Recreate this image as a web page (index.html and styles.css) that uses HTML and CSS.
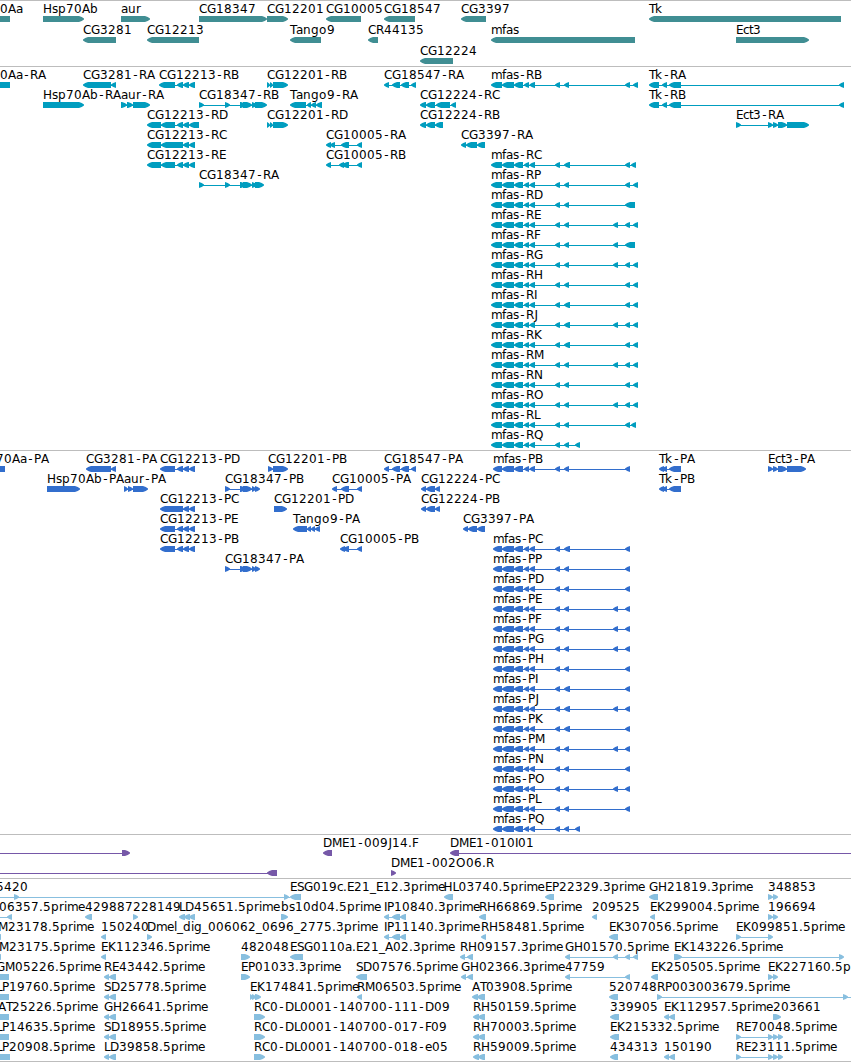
FILE: index.html
```html
<!DOCTYPE html>
<html lang="en">
<head>
<meta charset="utf-8">
<title>Genome browser</title>
<link rel="stylesheet" href="styles.css">
</head>
<body>
<main class="browser" id="browser"></main>
<script src="tracks.js"></script>
</body>
</html>
```
FILE: styles.css
```css
body {
  margin: 0;
  background: #fff;
}

.browser {
  display: flex;
  flex-direction: column;
  width: 851px;
  height: 1062px;
  overflow: hidden;
}

.track {
  display: flex;
  flex-direction: column;
  flex: none;
  border-top: 1px solid #bdbdbd;
  padding-bottom: 3px;
}

.track:last-child {
  border-bottom: 1px solid #bdbdbd;
}

.track-genes,
.track-est {
  padding-bottom: 2px;
}

.row {
  display: block;
  flex: none;
  width: 851px;
  height: 20px;
  overflow: visible;
}

.track-genes .row {
  height: 21px;
}

.label {
  font-family: "DejaVu Sans", sans-serif;
  font-size: 12px;
  fill: #000;
}

.track-genes { color: #408e93; }
.track-transcripts { color: #009dbf; }
.track-cds { color: #326ecd; }
.track-bac { color: #7658a8; }
.track-est { color: #88bfdf; }

.glyph {
  fill: currentColor;
}
```
FILE: tracks.js
```js
const L = -1, R = 1;
// Feature: [row, label, label x, strand, [start, end, start, end, ...], optional connector [from, to]]

const genes = [
  [0, "0Aa", 0, L, [-30, 10]], [0, "Hsp70Ab", 43, R, [43, 84]], [0, "aur", 121, R, [121, 150]],
  [0, "CG18347", 199, R, [199, 267]], [0, "CG12201", 267, R, [267, 288]],
  [0, "CG10005", 326, L, [326, 361]], [0, "CG18547", 384, L, [384, 415]],
  [0, "CG3397", 461, L, [461, 486]], [0, "Tk", 649, L, [649, 841]],
  [1, "CG3281", 83, L, [83, 116]], [1, "CG12213", 147, L, [147, 199]],
  [1, "Tango9", 290, L, [290, 321]], [1, "CR44135", 368, L, [368, 378]],
  [1, "mfas", 491, L, [491, 635]], [1, "Ect3", 736, R, [736, 809]],
  [2, "CG12224", 420, L, [420, 453]]
];

const c3 = [177, 183, 183, 189, 189, 195];
const c18547 = [384, 389, 392, 400, 401, 409, 411, 416];
const tk = [649, 659, 662, 667, 669, 681, 839, 844];

const transcripts = [
  [0, "0Aa-RA", 0, L, [-30, 10]], [0, "CG3281-RA", 83, L, [83, 111, 111, 116]],
  [0, "CG12213-RB", 159, L, [159, 175, ...c3]],
  [0, "CG12201-RB", 267, R, [267, 270, 270, 273, 273, 288]],
  [0, "CG18547-RA", 384, L, c18547], [0, "Tk-RA", 649, L, tk],
  [1, "Hsp70Ab-RA", 43, R, [43, 84]], [1, "aur-RA", 121, R, [121, 127, 127, 133, 133, 150]],
  [1, "CG18347-RB", 199, R, [199, 204, 225, 230, 240, 246, 243, 252, 252, 257, 255, 267]],
  [1, "Tango9-RA", 290, L, [290, 306, 307, 311, 311, 316, 316, 322]],
  [1, "CG12224-RC", 420, L, [420, 426, 426, 435, 436, 450, 451, 456]],
  [1, "Tk-RB", 649, L, tk],
  [2, "CG12213-RD", 147, L, [147, 161, 161, 175, 177, 183, 183, 189, 189, 199]],
  [2, "CG12201-RD", 267, R, [267, 270, 270, 273, 273, 288]],
  [2, "CG12224-RB", 420, L, [420, 426, 426, 435, 435, 443]],
  [2, "Ect3-RA", 736, R, [736, 741, 768, 773, 773, 778, 778, 787, 787, 809]],
  [3, "CG12213-RC", 147, L, [147, 161, 161, 183, 183, 189, 189, 195]],
  [3, "CG10005-RA", 326, L, [326, 331, 330, 335, 341, 349, 357, 362]],
  [3, "CG3397-RA", 461, L, [461, 466, 466, 477, 477, 485]],
  [4, "CG12213-RE", 147, L, [147, 161, 161, 175, ...c3]],
  [4, "CG10005-RB", 326, L, [326, 331, 339, 344, 342, 349, 357, 362]],
  [5, "CG18347-RA", 199, R, [199, 204, 225, 230, 240, 246, 243, 252, 252, 257, 255, 264]]
];

const cds = [
  [0, "70Aa-PA", -4, L, [-30, 5]], [0, "CG3281-PA", 86, L, [86, 111, 111, 116]],
  [0, "CG12213-PD", 160, L, [160, 175, ...c3]],
  [0, "CG12201-PB", 268, R, [268, 273, 273, 288]],
  [0, "CG18547-PA", 384, L, c18547],
  [0, "Tk-PA", 659, L, [659, 664, 662, 667, 669, 681]],
  [0, "Ect3-PA", 768, R, [768, 773, 773, 778, 778, 787, 787, 806]],
  [1, "Hsp70Ab-PA", 47, R, [47, 80]], [1, "aur-PA", 124, R, [124, 128, 128, 133, 133, 148]],
  [1, "CG18347-PB", 225, R, [225, 230, 240, 246, 243, 252, 252, 256, 255, 260]],
  [1, "CG10005-PA", 332, L, [332, 337, 341, 349, 357, 362]],
  [1, "CG12224-PC", 421, L, [421, 426, 426, 435, 435, 440]],
  [1, "Tk-PB", 659, L, [659, 664, 662, 667, 669, 681]],
  [2, "CG12213-PC", 160, L, [160, 183, 183, 189, 189, 195]],
  [2, "CG12201-PD", 274, R, [274, 287]],
  [2, "CG12224-PB", 421, L, [421, 426, 426, 435, 435, 440]],
  [3, "CG12213-PE", 160, L, [160, 175, ...c3]],
  [3, "Tango9-PA", 293, L, [293, 307, 307, 311, 311, 315, 315, 320]],
  [3, "CG3397-PA", 463, L, [463, 468, 468, 477, 477, 485]],
  [4, "CG12213-PB", 160, L, [160, 175, ...c3]],
  [4, "CG10005-PB", 340, L, [340, 345, 343, 349, 357, 362]],
  [5, "CG18347-PA", 225, R, [225, 230, 240, 246, 243, 252, 252, 256, 255, 260]]
];

// mfas isoforms: [suffix, end of seventh exon, upstream exons of the transcript]
const up = [625, 630, 633, 638], alt = [613, 618];
const isoforms = [
  ["B", 569, up], ["C", 570, [625, 630, 631, 636]], ["P", 569, up], ["D", 569, [625, 635]],
  ["E", 569, [...alt, ...up]], ["F", 569, [...alt, 625, 635]], ["G", 569, [...alt, ...up]],
  ["H", 569, up], ["I", 570, up], ["J", 570, [...alt, ...up]], ["K", 570, up],
  ["M", 569, [...alt, ...up]], ["N", 569, up], ["O", 569, [...alt, ...up]],
  ["L", 569, [625, 630, 631, 636]], ["Q", 569, [575, 580]]
];
isoforms.forEach(([s, e7, tail], i) => {
  const row = i === 0 ? 0 : i + 3;
  const core = [502, 514, 514, 523, 524, 529, 529.5, 535, 555, 560, 564, e7];
  let cdsTail = tail[0] === 613 ? [613, 618, 625, 630] : [625, 630];
  if (s === "Q") cdsTail = tail;
  transcripts.push([row, "mfas-R" + s, 491, L, [491, 502, ...core, ...tail]]);
  cds.push([row, "mfas-P" + s, 493, L, [493, 502, ...core, ...cdsTail]]);
});

const bac = [
  [0, "", 0, R, [122, 130], [-5, 125]], [0, "DME1-009J14.F", 323, L, [323, 332]],
  [0, "DME1-010I01", 450, L, [450, 459], [455, 860]],
  [1, "", 0, L, [267, 277], [-5, 270]], [1, "DME1-002O06.R", 391, R, [391, 396]]
];

const pair = [768, 773, 773, 778], four = [736, 741, 768, 773, 773, 778, 778, 783];
const est = [
  [0, "5420", -4, R, [14, 19, 284, 289], [-5, 290]],
  [0, "ESG019c.E21_E12.3prime", 290, L, [290, 301]], [0, "HL03740.5prime", 443.5, L, [444, 453]],
  [0, "EP22329.3prime", 545, L, [545, 554]], [0, "GH21819.3prime", 649, L, [649, 658]],
  [0, "348853", 768, R, pair],
  [1, "06357.5prime", -1, L, [7, 12], [-5, 10]], [1, "429887", 85, L, [85, 92]],
  [1, "228149", 133, R, [133, 138]], [1, "LD45651.5prime", 179, L, [179, 185, 184, 190, 189, 195]],
  [1, "bs10d04.5prime", 281, R, [281, 288]], [1, "IP10840.3prime", 384, L, [384, 389, 392, 400, 400, 406]],
  [1, "RH66869.5prime", 479, L, [479, 486]], [1, "209525", 592, L, [592, 597]],
  [1, "EK299004.5prime", 650, L, [650, 655]], [1, "196694", 768, R, pair],
  [2, "M23178.5prime", -2, L, [-4, 1]], [2, "150240", 101, L, [101, 106]],
  [2, "Dmel_dig_006062_0696_2775.3prime", 147, R, [147, 152]],
  [2, "IP11140.3prime", 384, L, [384, 389, 392, 400, 400, 406]],
  [2, "RH58481.5prime", 481, L, [481, 486]], [2, "EK307056.5prime", 609, L, [609, 618]],
  [2, "EK099851.5prime", 736, R, [736, 741, 768, 773]],
  [3, "M23175.5prime", -1, L, [-4, 1]], [3, "EK112346.5prime", 101, L, [101, 106]],
  [3, "482048", 241, R, [241, 250]], [3, "ESG0110a.E21_A02.3prime", 290, L, [290, 303]],
  [3, "RH09157.3prime", 460, L, [460, 465, 467, 473]],
  [3, "GH01570.5prime", 565, L, [565, 570, 613, 618, 625, 630, 633, 638]],
  [3, "EK143226.5prime", 674, R, [674, 682, 839, 844]],
  [4, "GM05226.5prime", -4, L, [-5, 9]], [4, "RE43442.5prime", 104, L, [104, 109, 109, 116]],
  [4, "EP01033.3prime", 241, R, [241, 250]], [4, "SD07576.5prime", 356, L, [356, 367]],
  [4, "GH02366.3prime", 461, L, [461, 466, 467, 473]],
  [4, "47759", 565, L, [565, 570, 625, 630]], [4, "EK250505.5prime", 651, L, [651, 658]],
  [4, "EK227160.5prime", 768, R, pair],
  [5, "LP19760.5prime", -4, L, [-5, 9]], [5, "SD25778.5prime", 104, L, [104, 109, 109, 116]],
  [5, "EK174841.5prime", 250, R, [250, 253, 252, 256, 255, 261]],
  [5, "RM06503.5prime", 357, L, [357, 362]], [5, "AT03908.5prime", 472, L, [472, 478, 477, 485]],
  [5, "520748", 609, L, [609, 618]], [5, "RP003003679.5prime", 657, R, [657, 662, 843, 848], [660, 860]],
  [6, "AT25226.5prime", -2, L, [-5, 9]], [6, "GH26641.5prime", 104, L, [104, 109, 109, 116]],
  [6, "RC0-DL0001-140700-111-D09", 254, R, [254, 265]],
  [6, "RH50159.5prime", 473, L, [473, 479, 478, 485]], [6, "339905", 610, L, [610, 619]],
  [6, "EK112957.5prime", 664, L, [664, 669, 669, 675]], [6, "203661", 773, R, [773, 781]],
  [7, "LP14635.5prime", -4, L, [-5, 9]], [7, "SD18955.5prime", 104, L, [104, 109, 109, 116]],
  [7, "RC0-DL0001-140700-017-F09", 254, R, [254, 265]],
  [7, "RH70003.5prime", 473, L, [473, 479, 478, 485]], [7, "EK215332.5prime", 610, L, [610, 619]],
  [7, "RE70048.5prime", 736, R, four],
  [8, "LP20908.5prime", -4, L, [-5, 10]], [8, "LD39858.5prime", 104, L, [104, 109, 109, 116]],
  [8, "RC0-DL0001-140700-018-e05", 254, R, [254, 265]],
  [8, "RH59009.5prime", 473, L, [473, 479, 478, 485]], [8, "434313", 610, L, [610, 618]],
  [8, "150190", 664, L, [664, 669, 669, 675]], [8, "RE23111.5prime", 736, R, four]
];

// Whole-pixel advances for label characters; digits and the rest are 8px.
const advance = {
  G: 9, H: 9, D: 9, M: 10, E: 7, S: 7, L: 6, P: 7, F: 6, T: 6, I: 3, J: 4, O: 10, Q: 10, N: 9,
  m: 11, r: 5, i: 3, l: 3, e: 7, a: 7, s: 6, c: 6, t: 4, f: 4, "-": 7, ".": 4, _: 6
};
const nudge = { "-": 1.3, J: 0.6 };

const NS = "http://www.w3.org/2000/svg";
function make(name, attrs, parent) {
  const el = document.createElementNS(NS, name);
  for (const k in attrs) el.setAttribute(k, attrs[k]);
  parent.appendChild(el);
  return el;
}

// Block with a slightly bulged arrowhead at the end that the strand points to.
function arrow(tip, tail, dir) {
  const h = Math.min(5, Math.abs(tail - tip));
  const mid = tip + dir * h * 0.45, neck = tip + dir * h;
  return [
    [tip, 17.6], [mid, 15.9], [neck, 15], [tail, 15],
    [tail, 21], [neck, 21], [mid, 20.1], [tip, 18.6]
  ].map(p => p.join(",")).join(" ");
}

function drawFeature(svg, [, label, x, strand, segs, line]) {
  const [from, to] = line || [segs[0] + 2, segs[segs.length - 1] - 2];
  if (line || segs.length > 2) {
    make("rect", { class: "glyph", x: from, y: 18, width: to - from, height: 1 }, svg);
  }
  for (let i = 0; i < segs.length; i += 2) {
    const a = segs[i], b = segs[i + 1];
    const points = strand === L ? arrow(a, b, 1) : arrow(b, a, -1);
    make("polygon", { class: "glyph", points }, svg);
  }
  if (label) {
    let pen = x;
    const xs = [...label].map(ch => {
      const at = pen + (nudge[ch] || 0);
      pen += advance[ch] || 8;
      return at;
    });
    make("text", { class: "label", x: xs.join(" "), y: 12 }, svg).textContent = label;
  }
}

function drawTrack(name, rows, features) {
  const track = document.createElement("section");
  track.className = "track track-" + name;
  document.getElementById("browser").appendChild(track);
  for (let r = 0; r < rows; r++) {
    const svg = make("svg", { class: "row" }, track);
    features.filter(f => f[0] === r).forEach(f => drawFeature(svg, f));
  }
}

drawTrack("genes", 3, genes);
drawTrack("transcripts", 19, transcripts);
drawTrack("cds", 19, cds);
drawTrack("bac", 2, bac);
drawTrack("est", 9, est);
```
